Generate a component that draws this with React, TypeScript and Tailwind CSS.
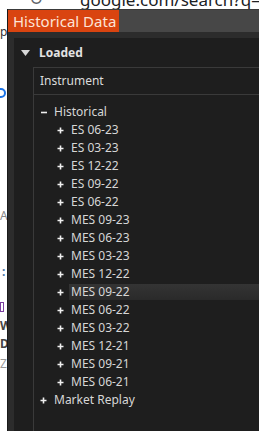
import React from 'react';

const contracts = [
  'ES 06-23',
  'ES 03-23',
  'ES 12-22',
  'ES 09-22',
  'ES 06-22',
  'MES 09-23',
  'MES 06-23',
  'MES 03-23',
  'MES 12-22',
  'MES 09-22',
  'MES 06-22',
  'MES 03-22',
  'MES 12-21',
  'MES 09-21',
  'MES 06-21',
];

const Plus = () => (
  <svg width="7" height="7" viewBox="0 0 7 7" className="shrink-0">
    <path d="M3.5 0.5v6M0.5 3.5h6" stroke="#f0f0f0" strokeWidth="1.6" />
  </svg>
);

const Minus = () => (
  <svg width="6" height="7" viewBox="0 0 6 7" className="shrink-0">
    <path d="M0 3.5h6" stroke="#f0f0f0" strokeWidth="1.6" />
  </svg>
);

const App: React.FC = () => {
  const selected = 'MES 09-22';

  return (
    <div className="w-[259px] h-[431px] overflow-hidden bg-white flex flex-col font-['Noto_Sans','Open_Sans',sans-serif]">
      {/* browser address strip peeking out above the window */}
      <div className="h-[9px] shrink-0 overflow-hidden flex items-start bg-white">
        <span className="ml-[29px] mt-[-10px] text-[17px] leading-[17px] text-[#5f6368]">↻</span>
        <span className="ml-[24px] mt-[3px] w-[7px] h-[6px] bg-[#5f6368] rounded-t-[1px]" />
        <span className="ml-[13px] mt-[-9px] text-[17px] leading-[17px] text-[#202124] whitespace-nowrap">
          google.com/search?q=visual
        </span>
      </div>

      <div className="flex flex-1 min-h-0">
        {/* page behind the window */}
        <div className="w-[7px] shrink-0 bg-white flex flex-col text-[12px] leading-none text-[#333] overflow-hidden">
          <span className="mt-[17px]">p</span>
          <span className="mt-[50px] ml-[-4px] w-[10px] h-[10px] rounded-full border-2 border-[#1a73e8]" />
          <span className="mt-[112px] text-[#888]">A</span>
          <span className="mt-[44px] ml-[2px] text-[#4a77a8] font-bold">:</span>
          <span className="mt-[24px] w-[4px] h-[10px] border border-[#7b3fa0]" />
          <span className="mt-[8px] font-bold text-[#444]">W</span>
          <span className="mt-[6px] font-bold text-[#444]">D</span>
          <span className="mt-[8px] text-[#999]">Z</span>
        </div>

        {/* window */}
        <div className="flex-1 flex flex-col bg-[#2c2c2c] border-l border-[#1a1a1a]">
          <div className="h-[23px] shrink-0 flex bg-[#474747] border-t border-[#3a3a3a]">
            <div className="w-[111px] bg-[#d94410] flex items-center pl-[5px] text-[15px] leading-none text-[#fde3d6] whitespace-nowrap">
              Historical Data
            </div>
          </div>
          <div className="h-[6px] shrink-0 bg-[#2c2c2c]" />

          <div className="flex-1 flex min-h-0">
            <div className="w-[6px] shrink-0 bg-[#2c2c2c]" />
            <div className="flex-1 bg-[#1e1e1e] flex flex-col min-h-0 text-[12px] text-[#d6d6d6]">
              {/* Loaded header */}
              <div className="h-[29px] shrink-0 flex items-center pl-[7px]">
                <svg width="9" height="6" viewBox="0 0 9 6" className="shrink-0">
                  <path d="M0 0h9L4.5 6z" fill="#d8d8d8" />
                </svg>
                <span className="ml-[9px] font-bold text-[#e2e2e2]">Loaded</span>
              </div>

              <div className="flex-1 ml-[19px] border-l border-[#3a3a3a] flex flex-col min-h-0">
                <div className="h-[28px] shrink-0 flex items-center pl-[6px] border-t border-b border-[#3a3a3a] text-[#dcdcdc]">
                  Instrument
                </div>

                <div className="pt-[8px] flex flex-col">
                  <div className="h-[18px] flex items-center pl-[7px]">
                    <Minus />
                    <span className="ml-[7px]">Historical</span>
                  </div>
                  {contracts.map((c) => (
                    <div key={c} className="h-[18px] flex items-center pl-[23px]">
                      <Plus />
                      <span
                        className={
                          c === selected
                            ? 'ml-[5px] pl-[2px] flex-1 h-[16px] flex items-center bg-gradient-to-b from-[#343434] to-[#2a2a2a]'
                            : 'ml-[7px]'
                        }
                      >
                        {c}
                      </span>
                    </div>
                  ))}
                  <div className="h-[18px] flex items-center pl-[6px]">
                    <Plus />
                    <span className="ml-[7px]">Market Replay</span>
                  </div>
                </div>
              </div>
            </div>
          </div>
        </div>
      </div>
    </div>
  );
};

export default App;
